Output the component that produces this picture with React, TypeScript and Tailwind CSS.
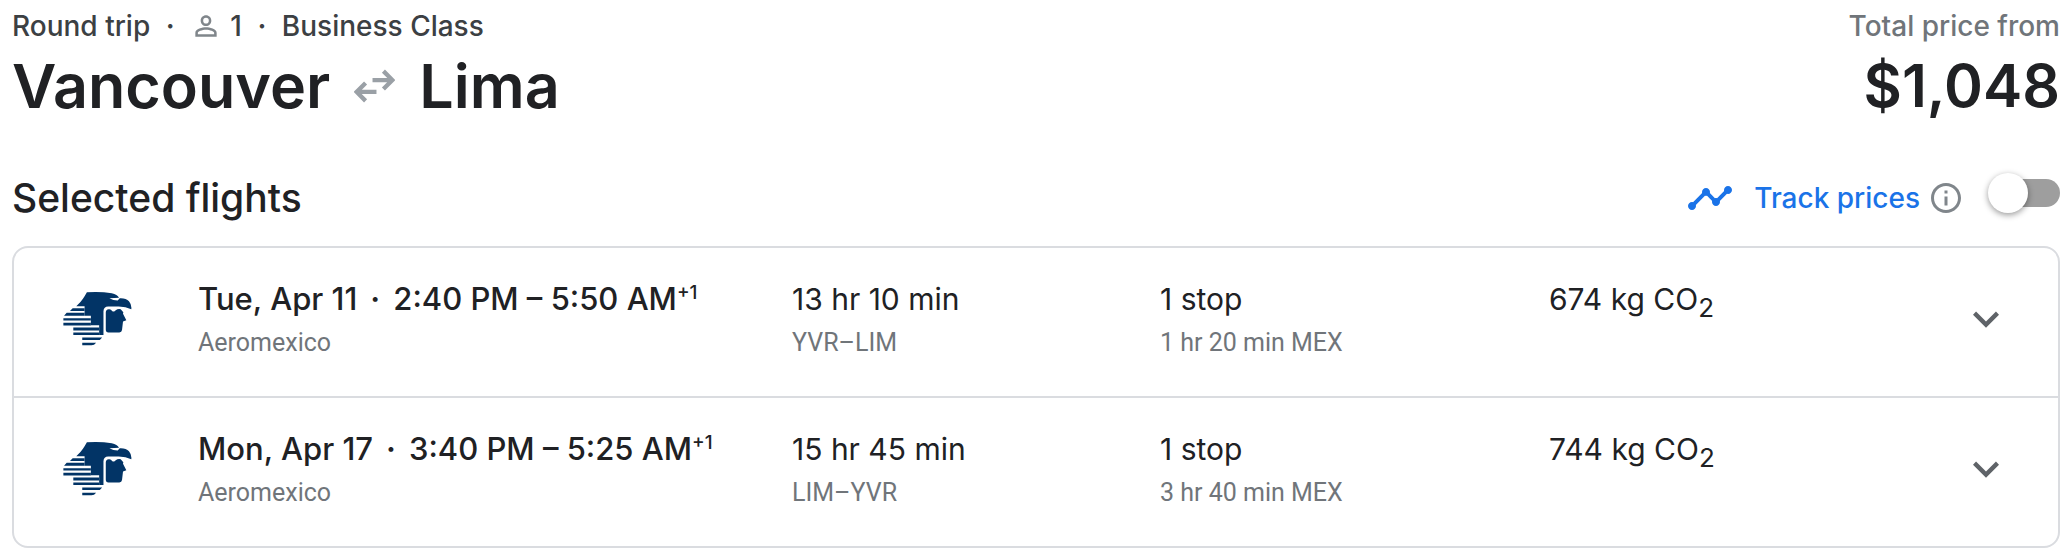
import { MdExpandMore, MdInfoOutline, MdOutlinePersonOutline, MdTimeline } from "react-icons/md";

type Flight = {
  date: string;
  times: string;
  duration: string;
  route: string;
  layover: string;
  co2: number;
};

const flights: Flight[] = [
  {
    date: "Tue, Apr 11",
    times: "2:40 PM – 5:50 AM",
    duration: "13 hr 10 min",
    route: "YVR–LIM",
    layover: "1 hr 20 min MEX",
    co2: 674,
  },
  {
    date: "Mon, Apr 17",
    times: "3:40 PM – 5:25 AM",
    duration: "15 hr 45 min",
    route: "LIM–YVR",
    layover: "3 hr 40 min MEX",
    co2: 744,
  },
];

function RoundTripArrows() {
  return (
    <svg viewBox="40 27 124 102" className="h-[34px] w-[41px] fill-none stroke-[#9aa0a6]" strokeWidth="13" aria-hidden="true">
      <path d="M96 60H154M129 33L156 60L129 87" />
      <path d="M108 96H50M75 69L48 96L75 123" />
    </svg>
  );
}

function AeromexicoLogo() {
  return (
    <svg viewBox="39 48 208 163" className="ml-px h-[54px] w-[69px] fill-[#023466]" role="img" aria-label="Aeromexico logo">
      <path d="M111 49Q152 46 186 52Q203 56 208 65L179 67Q190 74 204 74L210 67Q229 66 238 76Q247 87 245 100Q229 92 207 92H175Q162 92 161 106V178H148V148H123V120H104V91H79L87 83Q98 73 111 49Z" />
      <path d="M68 97H104V105H60ZM50 111H104V120H42ZM40 127H123V134H40ZM40 141H123V149H40ZM70 155H148V164H70ZM70 170H148V178H70ZM97 185H157L150 193H97ZM97 201H139Q133 209 125 209H97Z" />
      <path d="M168 110Q168 101 177 100Q184 99 187 105Q193 109 198 103Q205 98 213 100L221 109L220 114L230 133L220 137L217 163Q216 170 209 170H176Q168 170 168 161Z" />
    </svg>
  );
}

function FlightRow({ flight }: { flight: Flight }) {
  return (
    <li className="grid grid-cols-[136px_594fr_368fr_389fr_413fr_48px] items-center px-12 pt-[31px] pb-[37px] text-[30px]/10">
      <AeromexicoLogo />
      <div>
        <p className="flex text-[31px]/10 font-medium">
          {flight.date}
          <span className="w-9 text-center font-semibold">·</span>
          {flight.times}
          <span className="text-[19px]/7">+1</span>
        </p>
        <p className="mt-2 font-[Roboto,sans-serif] text-[25px]/8 text-[#70757a]">Aeromexico</p>
      </div>
      <div>
        <p>{flight.duration}</p>
        <p className="mt-2 font-[Roboto,sans-serif] text-[25px]/8 text-[#70757a]">{flight.route}</p>
      </div>
      <div>
        <p>1 stop</p>
        <p className="mt-2 font-[Roboto,sans-serif] text-[25px]/8 text-[#70757a]">{flight.layover}</p>
      </div>
      <p className="self-start">
        {flight.co2} kg CO<sub className="text-[26px]">2</sub>
      </p>
      <button type="button" aria-label={`Flight details for ${flight.date}`} className="flex h-12 items-center justify-center">
        <MdExpandMore className="size-[52px] shrink-0 text-[#5f6368]" />
      </button>
    </li>
  );
}

export default function App() {
  return (
    <main className="bg-white pt-2 pr-2 pb-2 pl-3 font-[Inter,sans-serif] text-[#202124]">
      <header className="flex justify-between font-medium">
        <div>
          <p className="flex items-center text-[28px]/9 text-[#3c4043]">
            Round trip
            <span className="w-10 text-center font-semibold">·</span>
            <MdOutlinePersonOutline className="mr-2 size-8 text-[#80868b]" />
            1
            <span className="w-10 text-center font-semibold">·</span>
            Business Class
          </p>
          <h1 className="flex items-center gap-6 pt-0.5 text-[61px]/20 font-semibold">
            Vancouver
            <RoundTripArrows />
            Lima
          </h1>
        </div>
        <div className="text-right">
          <p className="text-[28px]/9 text-[#70757a]">Total price from</p>
          <p className="pt-0.5 text-[59px]/20 font-semibold">$1,048</p>
        </div>
      </header>

      <div className="mt-12 flex h-12 items-center justify-between font-medium">
        <h2 className="text-[39px]">Selected flights</h2>
        <div className="flex items-center text-[28px]">
          <MdTimeline className="mr-5 size-12 text-[#1a73e8]" aria-hidden="true" />
          <label htmlFor="track-prices" className="text-[#1a73e8]">
            Track prices
          </label>
          <button type="button" aria-label="About price tracking" className="ml-2">
            <MdInfoOutline className="size-9 text-[#80868b]" />
          </button>
          <input
            id="track-prices"
            type="checkbox"
            role="switch"
            className="relative mb-2.5 ml-8 h-7 w-16 appearance-none rounded-full bg-[#9e9e9e] before:absolute before:-top-1.5 before:-left-2 before:size-10 before:rounded-full before:bg-white before:shadow-[0_2px_6px_rgba(0,0,0,0.4)] checked:bg-[#8ab4f8] checked:before:left-8 checked:before:bg-[#1a73e8]"
          />
        </div>
      </div>

      <ul className="mt-6 divide-y-2 divide-[#dadce0] rounded-2xl border-2 border-[#dadce0]">
        {flights.map((flight) => (
          <FlightRow key={flight.date} flight={flight} />
        ))}
      </ul>
    </main>
  );
}
